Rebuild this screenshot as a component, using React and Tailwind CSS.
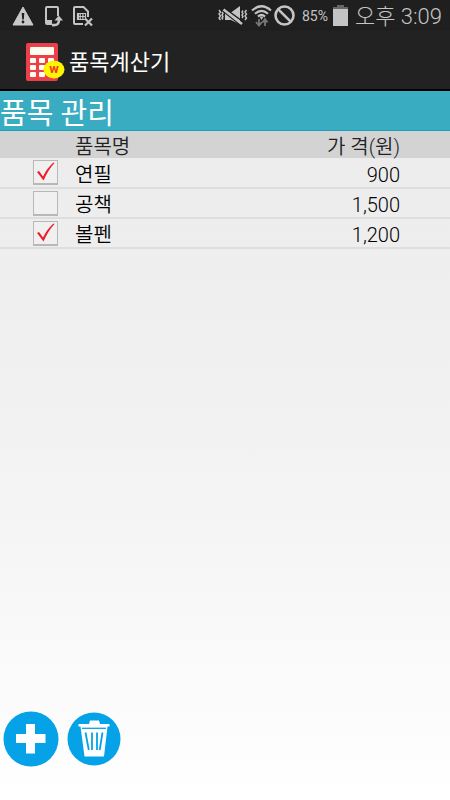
import { useState } from 'react'

const initialItems = [
  { id: 1, name: '연필', price: 900, checked: true },
  { id: 2, name: '공책', price: 1500, checked: false },
  { id: 3, name: '볼펜', price: 1200, checked: true },
]

function StatusBar() {
  return (
    <div className="flex h-[31px] items-center justify-between bg-[#1f1f1f] pl-3 pr-2 text-[#c4c4c4]">
      <div className="flex items-center gap-2.5">
        <svg className="h-5 w-[22px]" viewBox="0 0 22 20" fill="none">
          <path d="M11 1L21 19H1z" fill="#c8c8c8" stroke="#c8c8c8" strokeLinejoin="round" />
          <path d="M9.7 7h2.6l-.5 6.5h-1.6z" fill="#1f1f1f" />
          <circle cx="11" cy="16" r="1.4" fill="#1f1f1f" />
        </svg>
        <svg className="h-[22px] w-[19px]" viewBox="0 0 19 22" fill="none" stroke="currentColor">
          <path d="M14 11V3Q14 2 13 2H3Q2 2 2 3v15q0 1 1 1h5" strokeWidth="2" />
          <path d="M2 15h6v4H3z" fill="currentColor" stroke="none" />
          <path d="M8 20c5 .6 7-1 7-5" strokeWidth="2.600" />
          <path d="M10.500 15.500l4.300-5 4.200 5z" fill="currentColor" stroke="none" />
        </svg>
        <svg className="h-[22px] w-5" viewBox="0 0 20 22" fill="none" stroke="currentColor">
          <path d="M10 19H2Q1 19 1 18V3Q1 2 2 2h8.500L15 6.500V12" strokeWidth="2" />
          <path d="M4.500 8.500h8v6h-8zM7.200 8v7M9.900 8v7M4 11.500h8" strokeWidth="1.200" />
          <path d="M4 8h2v7H4z" fill="currentColor" stroke="none" />
          <path d="M12 13.500l7 7M19 13.500l-7 7" strokeWidth="2.200" />
        </svg>
      </div>

      <div className="flex items-center">
        <svg className="h-[22px] w-[30px]" viewBox="0 0 30 22" fill="none" stroke="currentColor">
          <path d="M7 7.500h6l9-6.500v18.500L13 15H7z" fill="currentColor" stroke="none" />
          <path d="M6 2.800L25.500 17" stroke="#1f1f1f" strokeWidth="1.500" />
          <path d="M6 6.800L23 20.500" stroke="#1f1f1f" strokeWidth="1.500" />
          <path d="M5.500 4.500L24 19" strokeWidth="2.400" />
          <path
            d="M1 5l1.500 2L1 9l1.500 2L1 13l1.500 2M4 7l1 1.500L4 10l1 1.500L4 13l1 1.500M25 5.500L24 7l1 1.500-1 1.500 1 1.500-1 1.500M28.500 5L27 7l1.500 2L27 11l1.500 2-1.500 2"
            strokeWidth="1.400"
          />
        </svg>
        <svg className="ml-[3px] h-[23px] w-[21px]" viewBox="0 0 21 23" fill="none" stroke="currentColor">
          <path d="M1 6.500q9.500-8.500 19 0M4 9.800q6.500-6 13 0M7 12.600q3.500-3.300 7 0" strokeWidth="2.200" />
          <path d="M8.500 12.500h4l-2 3.500z" fill="currentColor" stroke="none" />
          <path d="M8 15v6M5 18l3 3.500L11 18M14 22v-6M11.500 18.500l2.500-3.500 2.500 3.500" stroke="#777" strokeWidth="1.800" />
        </svg>
        <svg className="ml-0.5 size-[21px]" viewBox="0 0 21 21" fill="none" stroke="currentColor" strokeWidth="2.600">
          <circle cx="10.500" cy="10.500" r="9" />
          <path d="M4.300 4.300l12.400 12.400" />
        </svg>
        <span className="ml-[7px] text-[14px] leading-5">85%</span>
        <svg className="ml-[5px] h-[21px] w-[15px]" viewBox="0 0 15 21">
          <path d="M4 0h7v2h4v4H0V2h4z" fill="#666" />
          <path d="M0 4h15v17H0z" fill="#c4c4c4" />
        </svg>
        <span className="ml-[7px] pt-0.5 text-[22px] font-light leading-7">오후 3:09</span>
      </div>
    </div>
  )
}

function CalculatorIcon() {
  return (
    <svg className="h-10 w-10" viewBox="0 0 40 40" aria-hidden="true">
      <rect x="1" y="1" width="32" height="38" rx="2" fill="#ec3f4c" />
      <rect x="5" y="5" width="24" height="8" rx="1" fill="#fffdf0" />
      <g fill="#fffdf0">
        <rect x="5" y="16" width="6" height="5" rx="1" />
        <rect x="14" y="16" width="6" height="5" rx="1" />
        <rect x="23" y="16" width="6" height="5" rx="1" />
        <rect x="5" y="23" width="6" height="5" rx="1" />
        <rect x="14" y="23" width="6" height="5" rx="1" />
        <rect x="5" y="30" width="6" height="5" rx="1" />
        <rect x="14" y="30" width="6" height="5" rx="1" />
        <rect x="23" y="30" width="6" height="5" rx="1" />
      </g>
      <ellipse cx="29" cy="27.500" rx="10.500" ry="9" fill="#fff500" />
      <text x="29" y="31" textAnchor="middle" fontSize="13" fontWeight="bold" fill="#f03a20">
        w
      </text>
    </svg>
  )
}

export default function App() {
  const [items, setItems] = useState(initialItems)

  const toggleItem = (id) => {
    setItems(items.map((item) => (item.id === id ? { ...item, checked: !item.checked } : item)))
  }

  const addItem = () => {
    const name = window.prompt('품목명')
    if (!name) return
    const price = Number(window.prompt('가 격(원)')) || 0
    setItems([...items, { id: Date.now(), name, price, checked: false }])
  }

  const deleteChecked = () => {
    setItems(items.filter((item) => !item.checked))
  }

  return (
    <div className="flex min-h-screen flex-col bg-white font-[Roboto,'Noto_Sans_CJK_KR',sans-serif] text-black">
      <StatusBar />

      <header className="flex h-[60px] items-center gap-1 border-b-2 border-black bg-[#222222] pl-[25px] pt-1 text-white">
        <CalculatorIcon />
        <h1 className="pt-0.5 text-[22px] leading-7">품목계산기</h1>
      </header>

      <main className="flex flex-1 flex-col bg-linear-to-b from-[#ebebeb] via-[#f2f2f2] to-white">
        <h2 className="h-10 border-b border-[#12a2b9] bg-[#39acc1] pt-[7px] text-[29px] leading-8 text-white">
          품목 관리
        </h2>

        <table className="w-full table-fixed border-collapse text-[20px] font-[350]">
          <thead>
            <tr className="bg-[#d3d3d3] leading-[22px] text-[#222222]">
              <th className="w-[75px] p-0" aria-label="선택"></th>
              <th className="p-0 pt-[5px] text-left font-[350]">품목명</th>
              <th className="p-0 pr-[50px] pt-[5px] text-right font-[350]">가 격(원)</th>
            </tr>
          </thead>
          <tbody>
            {items.map((item) => (
              <tr key={item.id} className="h-[30px] border-b-2 border-[#dedede] leading-[23px]">
                <td className="p-0 pl-[33px]">
                  <div className="relative size-[25px]">
                    <input
                      id={`item-${item.id}`}
                      type="checkbox"
                      checked={item.checked}
                      onChange={() => toggleItem(item.id)}
                      className="peer block size-[25px] appearance-none border border-b-2 border-[#b8b8b8] bg-[#f0f0f0]"
                    />
                    <svg
                      className="pointer-events-none invisible absolute inset-0 size-[25px] peer-checked:visible"
                      viewBox="0 0 25 25"
                    >
                      <path d="M4 12l2-1 4 5.500Q14 8 20.500 2.500l1 .500Q15 10 10.500 20.500z" fill="#ec1c2a" />
                    </svg>
                  </div>
                </td>
                <td className="p-0 pt-[5px]">
                  <label htmlFor={`item-${item.id}`}>{item.name}</label>
                </td>
                <td className="p-0 pr-[50px] pt-[5px] text-right">{item.price.toLocaleString('en-US')}</td>
              </tr>
            ))}
          </tbody>
        </table>

        <div className="mt-auto flex items-center gap-2 pb-[33px] pl-[3px]">
          <button type="button" aria-label="추가" onClick={addItem}>
            <svg className="size-14" viewBox="0 0 56 56">
              <circle cx="28" cy="28" r="27.500" fill="#05a2e8" />
              <path d="M23 13h9v10h10.500v9H32v10.500h-9V32H13v-9h10z" fill="#fff" />
            </svg>
          </button>
          <button type="button" aria-label="삭제" onClick={deleteChecked}>
            <svg className="size-[54px]" viewBox="0 0 54 54">
              <circle cx="27" cy="27" r="26.500" fill="#05a2e8" />
              <path d="M11.500 12h10.500l1-3.500h9l1 3.500h9.500v2.500H40.500L37 44.500H17.500L13.500 14.500h-2z" fill="#fff" />
              <path d="M15 16.300h24" stroke="#05a2e8" strokeWidth="1.300" />
              <path d="M18.500 20.500l3.300 17.500M25 20.500V38M30 20.500V38M35.500 20.500L32.700 38" fill="none" stroke="#05a2e8" strokeWidth="1.800" />
            </svg>
          </button>
        </div>
      </main>
    </div>
  )
}
